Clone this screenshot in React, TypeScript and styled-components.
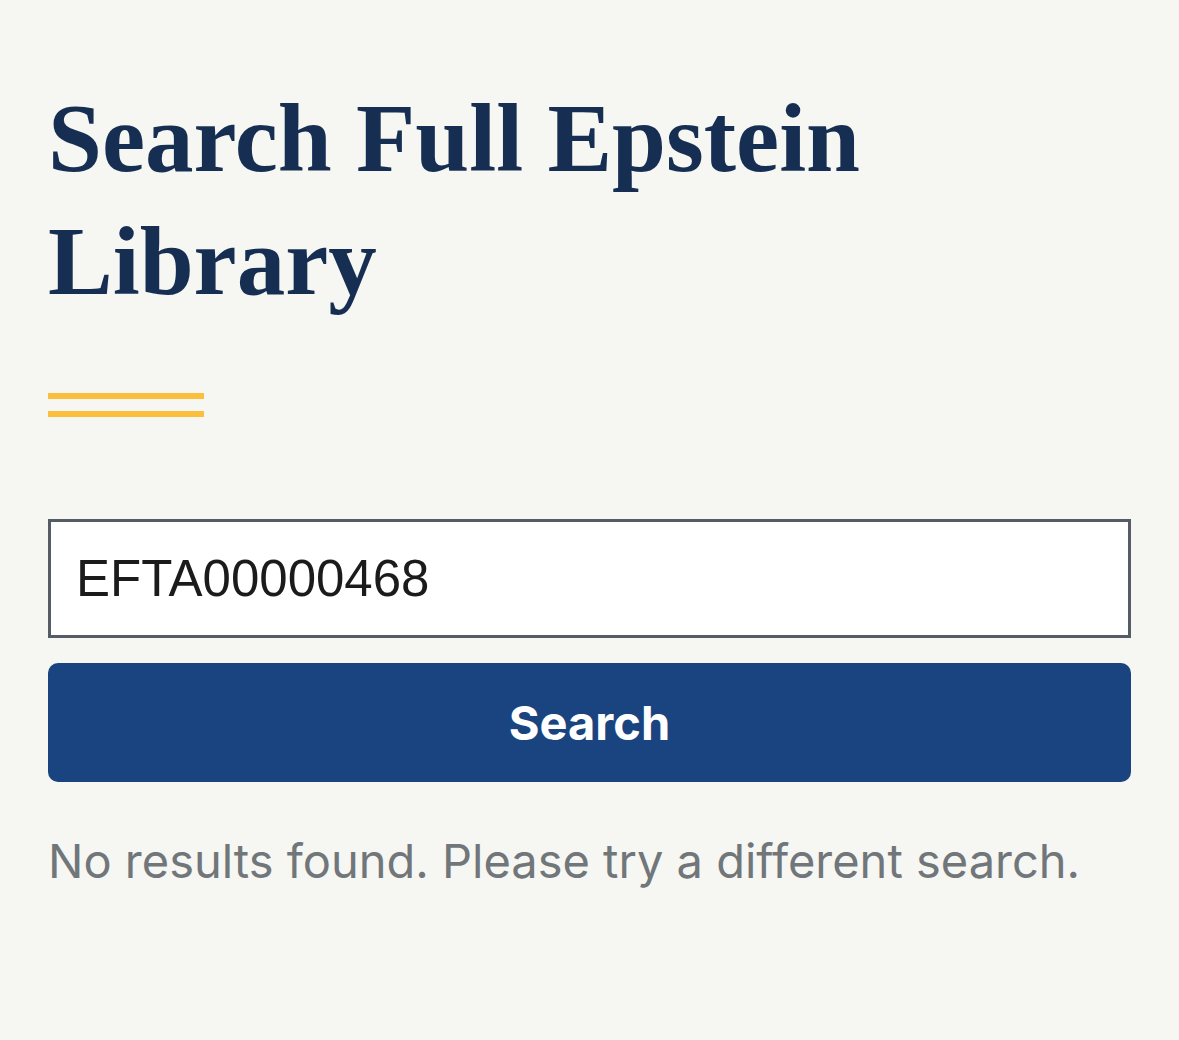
import React from "react"
import styled, { createGlobalStyle } from "styled-components"

const GlobalStyle = createGlobalStyle`
  html, body {
    margin: 0;
    padding: 0;
    background: #f6f6f2;
  }
`

const Page = styled.main`
  box-sizing: border-box;
  width: 1179px;
  min-height: 1040px;
  padding: 77px 48px 0;
  background: #f6f6f2;
  display: flex;
  flex-direction: column;
`

const Title = styled.h1`
  margin: 0;
  font-family: "Liberation Serif", "DejaVu Serif", serif;
  font-weight: 700;
  font-size: 97px;
  line-height: 123px;
  color: #162e51;
`

const Accent = styled.div`
  margin-top: 70px;
  width: 156px;
  display: flex;
  flex-direction: column;
  gap: 12px;
`

const AccentLine = styled.span`
  display: block;
  height: 6px;
  background: #fbbf3b;
`

const Form = styled.form`
  margin-top: 102px;
  display: flex;
  flex-direction: column;
  gap: 25px;
`

const Input = styled.input`
  box-sizing: border-box;
  width: 100%;
  height: 119px;
  margin: 0;
  padding: 0 25px;
  border: 3px solid #565c65;
  border-radius: 0;
  background: #fff;
  font-family: "Liberation Sans", Arial, sans-serif;
  font-size: 51px;
  color: #1b1b1b;
  outline: none;
`

const Button = styled.button`
  box-sizing: border-box;
  width: 100%;
  height: 119px;
  border: 0;
  border-radius: 10px;
  background: #1a4480;
  color: #fff;
  font-family: Inter, "Liberation Sans", sans-serif;
  font-weight: 700;
  font-size: 47px;
  cursor: pointer;
`

const Message = styled.p`
  margin: 50px 0 0;
  font-family: Inter, "Liberation Sans", sans-serif;
  font-size: 47px;
  color: #71767a;
`

const App: React.FC = () => (
  <>
    <GlobalStyle />
    <Page>
      <Title>
        Search Full Epstein
        <br />
        Library
      </Title>
      <Accent>
        <AccentLine />
        <AccentLine />
      </Accent>
      <Form onSubmit={e => e.preventDefault()}>
        <Input defaultValue="EFTA00000468" aria-label="Search" />
        <Button type="submit">Search</Button>
      </Form>
      <Message>No results found. Please try a different search.</Message>
    </Page>
  </>
)

export default App
